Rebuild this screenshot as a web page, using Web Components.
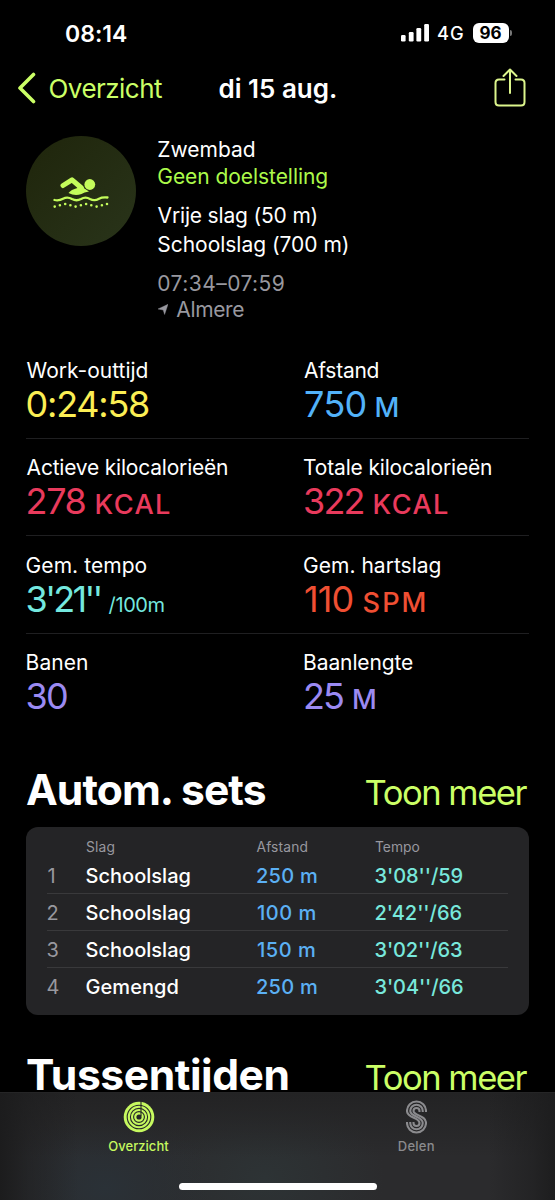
<!DOCTYPE html>
<html lang="nl">
<head>
  <meta charset="UTF-8">
  <title>Work-out</title>
  <style>
    html,
    body {
      margin: 0;
      height: 100%;
      overflow: hidden;
      background-color: #000;
    }
    body {
      color: #fff;
      font-family: Inter, "Liberation Sans", sans-serif;
      --lime: #cbff66;
    }
  </style>
</head>
<body>
<workout-app></workout-app>

<script>
  function render(el, html) {
    el.attachShadow({mode: 'open'}).innerHTML = html;
  }

  class StatusBar extends HTMLElement {
    connectedCallback() {
      render(this, `
        <style>
          :host {
            display: flex;
            align-items: center;
            height: 26px;
            padding: 20px 43.5px 15px 66px;
          }
          .time { font-size: 23px; font-weight: 600; padding-top: 1px; }
          .signal { margin-left: auto; }
          .net { font-size: 18.3px; font-weight: 500; margin: 0 9.5px; }
          .battery {
            display: flex;
            align-items: center;
            justify-content: center;
            width: 36px;
            height: 19.5px;
            border-radius: 6px;
            background: #fff;
            color: #000;
            font-size: 17px;
            font-weight: 700;
          }
          .nub {
            width: 2px;
            height: 6px;
            margin-left: 1px;
            border-radius: 0 2px 2px 0;
            background: #777;
          }
        </style>
        <ink-text class="time" ink="61">${this.getAttribute('time')}</ink-text>
        <svg class="signal" width="28" height="18" fill="#fff">
          <rect x="0" y="11" width="4.6" height="6.5" rx="1.2"/>
          <rect x="7.8" y="8" width="4.8" height="9.5" rx="1.2"/>
          <rect x="15.4" y="4" width="4.8" height="13.5" rx="1.2"/>
          <rect x="23.2" y="0" width="4.8" height="17.5" rx="1.2"/>
        </svg>
        <ink-text class="net" ink="25">4G</ink-text>
        <div class="battery"><ink-text ink="22">${this.getAttribute('battery')}</ink-text></div>
        <div class="nub"></div>`);
    }
  }

  class NavBar extends HTMLElement {
    connectedCallback() {
      render(this, `
        <style>
          :host {
            display: grid;
            grid-template-columns: 201.5px 1fr 48px;
            align-items: center;
            height: 54px;
            padding: 0 13px 0 18px;
            font-size: 26px;
          }
          .back { display: flex; align-items: center; color: var(--lime); }
          .back svg { margin-right: 13.5px; }
          .title { font-weight: 600; }
        </style>
        <div class="back">
          <svg width="18" height="32" fill="none" stroke="currentColor" stroke-width="3.6"
               stroke-linecap="round" stroke-linejoin="round">
            <path d="M15.5 2.5 2 16l13.5 13.5"/>
          </svg>
          <ink-text ink="112.5">Overzicht</ink-text>
        </div>
        <ink-text class="title" ink="116.5">di 15 aug.</ink-text>
        <svg width="33" height="40" fill="none" stroke="#dcf58c" stroke-width="2"
             stroke-linecap="round" stroke-linejoin="round">
          <path d="M10.5 11.5H5q-3.500 0-3.500 3.500v19q0 3.500 3.500 3.500h22q3.500 0 3.500-3.500v-19q0-3.500-3.500-3.500h-5.500"/>
          <path d="M16 25V2M9.500 8 16 1.500 22.500 8"/>
        </svg>`);
    }
  }

  class WorkoutSummary extends HTMLElement {
    connectedCallback() {
      render(this, `
        <style>
          :host {
            display: flex;
            height: 205.7px;
            padding: 21px 26px 0;
            font-size: 21px;
          }
          .badge {
            display: grid;
            place-items: center;
            width: 110px;
            height: 110px;
            margin-right: 22.3px;
            border-radius: 50%;
            background: linear-gradient(135deg, #1f250b, #29341a);
          }
          .lines { padding-top: 1.1px; line-height: 26.5px; }
          .goal { color: #acfa4a; }
          .strokes { margin-top: 10.8px; line-height: 29px; }
          .strokes div:first-child { margin-left: -0.7px; }
          .when { margin-top: 11.9px; line-height: 26px; color: #98989f; }
          .place { display: flex; align-items: center; gap: 8px; }
        </style>
        <div class="badge">
          <svg width="56" height="34" viewBox="0 0 56 34" fill="#c4fc5b">
            <path d="M10 11.5 19 5.8 28.5 14" fill="none" stroke="#c4fc5b" stroke-width="5"
                  stroke-linecap="round" stroke-linejoin="round"/>
            <path d="M24 9.5 36 17.5Q31 18 28.5 20Q22 22.5 15.5 19Q18 15.5 24.5 14Z"/>
            <circle cx="36.8" cy="10.5" r="5.4"/>
            <path d="M1.5 26Q6 27 10 24.7Q14.5 22.3 19 25Q23.5 27.5 28 25Q32.5 22.3 37 25Q41.5 27.5 46 24.7Q49 23 54.5 23.5"
                  fill="none" stroke="#c4fc5b" stroke-width="2.3" stroke-linecap="round"/>
            <path d="M1.7 32.6h.01M6.9 31.3h.01M12.2 30h.01M17.4 31.3h.01M22.6 32.6h.01M27.9 31.3h.01M33.1 30h.01M38.3 31.3h.01M43.6 32.6h.01M48.9 31.3h.01M54 30h.01"
                  fill="none" stroke="#c4fc5b" stroke-width="2.6" stroke-linecap="round"/>
          </svg>
        </div>
        <div class="lines">
          <div><ink-text ink="96.5">Zwembad</ink-text></div>
          <div class="goal"><ink-text ink="169">Geen doelstelling</ink-text></div>
          <div class="strokes">
            <div><ink-text ink="159">Vrije slag (50 m)</ink-text></div>
            <div><ink-text ink="189.5">Schoolslag (700 m)</ink-text></div>
          </div>
          <div class="when">
            <div><ink-text ink="125.5">07:34–07:59</ink-text></div>
            <div class="place">
              <svg width="10" height="11" fill="currentColor"><path d="M10 .3 6.6 10.5 5.2 6 0 5Z" stroke="currentColor" stroke-width=".4"/></svg>
              <ink-text ink="68">Almere</ink-text>
            </div>
          </div>
        </div>`);
    }
  }

  class WorkoutMetric extends HTMLElement {
    connectedCallback() {
      const label = this.getAttribute('label');
      const value = this.getAttribute('value');
      const unit = this.getAttribute('unit');
      const [labelInk, valueInk, unitInk] = this.getAttribute('inks').split(' ');
      render(this, `
        <style>
          :host { display: block; padding: 16.4px 0 0 0.6px; }
          .label { font-size: 21px; line-height: 26px; height: 26px; }
          .value {
            display: flex;
            align-items: baseline;
            gap: 11px;
            height: 40px;
            padding-left: 1px;
            line-height: 40.4px;
            font-size: 36px;
            color: var(--value);
          }
          .unit { font-size: 27.2px; font-weight: 500; }
          :host([small]) .value { gap: 8px; }
          :host([small]) .unit { font-size: 20px; font-weight: 400; }
        </style>
        <div class="label"><ink-text ink="${labelInk}">${label}</ink-text></div>
        <div class="value">
          <ink-text ink="${valueInk}">${value}</ink-text>
          ${unit ? `<ink-text class="unit" ink="${unitInk}">${unit}</ink-text>` : ''}
        </div>`);
    }
  }

  class MetricRow extends HTMLElement {
    connectedCallback() {
      render(this, `
        <style>
          :host {
            display: grid;
            grid-template-columns: 277.5px 1fr;
            box-sizing: border-box;
            height: 97.3px;
            margin: 0 26px;
            border-bottom: 1px solid #1f1f21;
          }
          :host([last]) { border-color: transparent; }
        </style>
        <slot></slot>`);
    }
  }

  class SectionTitle extends HTMLElement {
    connectedCallback() {
      render(this, `
        <style>
          :host {
            display: flex;
            justify-content: space-between;
            align-items: baseline;
            height: 50px;
            padding: 0 27.5px 0 27px;
            line-height: 51px;
          }
          .title { font-size: 42.6px; font-weight: 700; }
          .more { font-size: 34.6px; color: var(--lime); }
        </style>
        <ink-text class="title" ink="${this.getAttribute('ink')}"><slot></slot></ink-text>
        <ink-text class="more" ink="162">Toon meer</ink-text>`);
    }
  }

  class SetTable extends HTMLElement {
    connectedCallback() {
      render(this, `
        <style>
          :host {
            display: block;
            box-sizing: border-box;
            height: 188.3px;
            margin: 12.5px 26px 34.2px;
            padding: 11px 21px 0;
            border-radius: 12px;
            background: #242426;
          }
          .head {
            display: grid;
            grid-template-columns: 39px 170.5px 118.5px 1fr;
            height: 18.7px;
            line-height: 18px;
            font-size: 13.8px;
            color: #98989f;
          }
        </style>
        <div class="head">
          <span></span>
          <ink-text ink="28.5">Slag</ink-text>
          <ink-text ink="51">Afstand</ink-text>
          <ink-text ink="44.5">Tempo</ink-text>
        </div>
        <slot></slot>`);
    }
  }

  class SetRow extends HTMLElement {
    connectedCallback() {
      const get = name => this.getAttribute(name);
      const inks = get('inks').split(' ');
      render(this, `
        <style>
          :host {
            display: grid;
            grid-template-columns: 39px 170.5px 118.5px 1fr;
            box-sizing: border-box;
            height: 37.2px;
            line-height: 38.8px;
            border-bottom: 1px solid #39393b;
            font-size: 20px;
            font-weight: 500;
          }
          :host(:last-of-type) { border-color: transparent; }
          ink-text { margin-left: 0.5px; }
          .n { color: #98989f; font-weight: 400; }
          .distance { color: #5bb0f4; }
          .tempo { color: #78e8dc; }
        </style>
        <ink-text class="n" ink="${inks[0]}">${get('n')}</ink-text>
        <ink-text ink="${inks[1]}">${get('stroke')}</ink-text>
        <ink-text class="distance" ink="${inks[2]}">${get('distance')}</ink-text>
        <ink-text class="tempo" ink="${inks[3]}">${get('tempo')}</ink-text>`);
    }
  }

  class TabItem extends HTMLElement {
    connectedCallback() {
      render(this, `
        <style>
          :host {
            display: flex;
            flex-direction: column;
            align-items: center;
            font-size: 13px;
            font-weight: 500;
            line-height: 18px;
            color: #8b8b8e;
          }
          :host([active]) { color: #c6f95f; }
          .icon { display: grid; place-items: center; height: 34px; margin-bottom: 3px; }
        </style>
        <div class="icon"><slot></slot></div>
        <ink-text ink="${this.getAttribute('ink')}">${this.getAttribute('label')}</ink-text>`);
    }
  }

  class TabBar extends HTMLElement {
    connectedCallback() {
      render(this, `
        <style>
          :host {
            display: flex;
            flex-direction: column;
            justify-content: space-between;
            box-sizing: border-box;
            height: 108px;
            padding: 7px 0 10.5px;
            border-top: 1px solid #252526;
            background:
              linear-gradient(90deg, #1c1c1d, #1c1c1d80 5%, #1c1c1d00 14%, #1c1c1d00 88%, #1c1c1d80 96%, #1d1d1e),
              linear-gradient(#232324, #23232400 60%),
              radial-gradient(110px 80px at 105px 95px, #2a3137, #2a313700),
              radial-gradient(120px 85px at 265px 85px, #2d3335, #2d333500),
              #2b2b2d;
          }
          .tabs { display: grid; grid-template-columns: 1fr 1fr; }
          .home { width: 198px; height: 6.5px; margin: 0 auto; border-radius: 4px; background: #fff; }
        </style>
        <div class="tabs"><slot></slot></div>
        <div class="home"></div>`);
    }
  }

  class WorkoutApp extends HTMLElement {
    connectedCallback() {
      render(this, `
        <style>
          :host { display: flex; flex-direction: column; height: 1200px; width: 555px; }
          main { flex: 1; min-height: 0; overflow: hidden; }
          .spacer { height: 33.6px; }
        </style>
        <status-bar time="08:14" battery="96"></status-bar>
        <nav-bar></nav-bar>
        <main>
          <workout-summary></workout-summary>
          <metric-row>
            <workout-metric label="Work-outtijd" value="0:24:58" inks="121 121.5" style="--value: #fbee54"></workout-metric>
            <workout-metric label="Afstand" value="750" unit="M" inks="74.5 60.5 21.5" style="--value: #52b2f9"></workout-metric>
          </metric-row>
          <metric-row>
            <workout-metric label="Actieve kilocalorieën" value="278" unit="KCAL" inks="200.5 58 73.5" style="--value: #e93a5c"></workout-metric>
            <workout-metric label="Totale kilocalorieën" value="322" unit="KCAL" inks="187 58.5 73.5" style="--value: #e93a5c"></workout-metric>
          </metric-row>
          <metric-row>
            <workout-metric small label="Gem. tempo" value="3'21''" unit="/100m" inks="120 73 55" style="--value: #74e8df"></workout-metric>
            <workout-metric label="Gem. hartslag" value="110" unit="SPM" inks="136.5 47.5 61" style="--value: #f04f33"></workout-metric>
          </metric-row>
          <metric-row last>
            <workout-metric label="Banen" value="30" inks="60.5 39.5" style="--value: #9b8af2"></workout-metric>
            <workout-metric label="Baanlengte" value="25" unit="M" inks="109 38 21.5" style="--value: #9b8af2"></workout-metric>
          </metric-row>
          <div class="spacer"></div>
          <section-title ink="240">Autom. sets</section-title>
          <set-table>
            <set-row n="1" stroke="Schoolslag" distance="250 m" tempo="3'08''/59" inks="7.5 103 60 87"></set-row>
            <set-row n="2" stroke="Schoolslag" distance="100 m" tempo="2'42''/66" inks="10.5 103 58.5 86"></set-row>
            <set-row n="3" stroke="Schoolslag" distance="150 m" tempo="3'02''/63" inks="10.5 103 58 86.5"></set-row>
            <set-row n="4" stroke="Gemengd" distance="250 m" tempo="3'04''/66" inks="11.5 91 60 87.5"></set-row>
          </set-table>
          <section-title ink="260.5">Tussentijden</section-title>
        </main>
        <tab-bar>
          <tab-item active label="Overzicht" ink="61">
            <svg width="32" height="32" viewBox="-16 -16 32 32" fill="none" stroke="#262729" stroke-width="1.1">
              <circle r="15.3" fill="#c6f95f" stroke="none"/>
              <circle r="11.8"/>
              <circle r="8.6"/>
              <circle r="5.4"/>
              <circle r="2.6" fill="#262729" stroke="none"/>
              <path d="M2-16V-1"/>
            </svg>
          </tab-item>
          <tab-item label="Delen" ink="35">
            <svg width="21" height="34" viewBox="0 0 21 34" fill="none" stroke="currentColor" stroke-width="2.1">
              <path d="M20 12V11A9.5 9.5 0 0 0 1 11C1 18.5 13.5 17 13.5 23A3 3 0 0 1 7.5 23V22"/>
              <path d="M16.75 12V11A6.25 6.25 0 0 0 4.25 11C4.25 17 16.75 16 16.75 23A6.25 6.25 0 0 1 4.25 23V22"/>
              <path d="M13.5 12V11A3 3 0 0 0 7.5 11C7.5 16 20 15 20 23A9.5 9.5 0 0 1 1 23V22"/>
            </svg>
          </tab-item>
        </tab-bar>`);
    }
  }

  // Tracks its text so that the visible glyphs span exactly `ink` pixels.
  class InkText extends HTMLElement {
    connectedCallback() {
      render(this, `
        <style>
          :host { display: inline-block; flex: none; white-space: nowrap; }
          span { display: inline-block; }
        </style>
        <span><slot></slot></span>`);
      const slot = this.querySelector('slot');
      const text = slot ? slot.assignedNodes().map(n => n.textContent).join('') : this.textContent;
      const ink = parseFloat(this.getAttribute('ink'));
      const css = getComputedStyle(this);
      const ctx = document.createElement('canvas').getContext('2d');
      ctx.font = `${css.fontWeight} ${css.fontSize} ${css.fontFamily}`;
      const m = ctx.measureText(text);
      const natural = m.actualBoundingBoxLeft + m.actualBoundingBoxRight;
      const span = this.shadowRoot.querySelector('span');
      if (text.length > 1) {
        span.style.letterSpacing = `${(ink - natural) / (text.length - 1)}px`;
      }
      span.style.marginLeft = `${m.actualBoundingBoxLeft}px`;
      this.style.width = `${ink}px`;
    }
  }

  customElements.define('workout-app', WorkoutApp);
  customElements.define('status-bar', StatusBar);
  customElements.define('nav-bar', NavBar);
  customElements.define('workout-summary', WorkoutSummary);
  customElements.define('metric-row', MetricRow);
  customElements.define('workout-metric', WorkoutMetric);
  customElements.define('section-title', SectionTitle);
  customElements.define('set-table', SetTable);
  customElements.define('set-row', SetRow);
  customElements.define('tab-bar', TabBar);
  customElements.define('tab-item', TabItem);
  customElements.define('ink-text', InkText);
</script>
</body>
</html>
